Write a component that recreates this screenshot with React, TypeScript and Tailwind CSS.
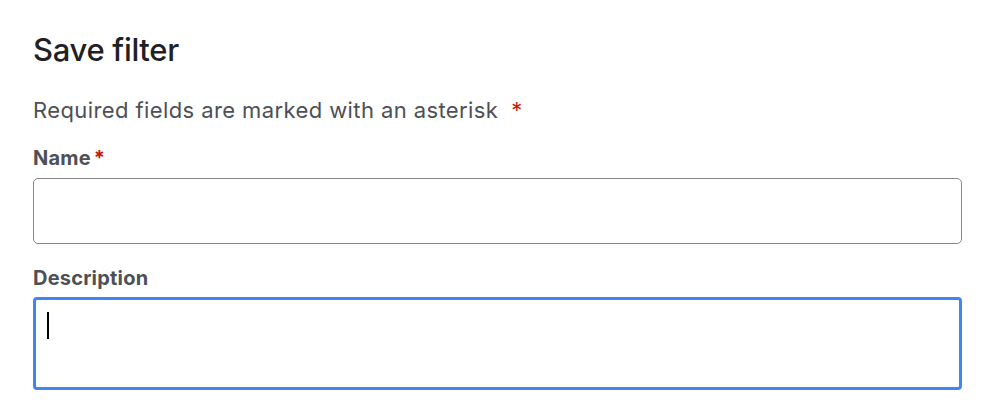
import React from "react";

export default function App() {
  return (
    <div className="w-[998px] h-[408px] bg-white overflow-hidden" style={{ fontFamily: 'Inter, "Liberation Sans", sans-serif' }}>
      <div className="pl-[33px] pr-[36px] pt-[30px]">
        <h1 className="text-[31px] leading-[40px] font-medium text-[#1f2125] tracking-[-0.3px]">Save filter</h1>
        <p className="mt-[26px] text-[22px] leading-[28px] text-[#4d5056] tracking-[0.4px]">
          Required fields are marked with an asterisk<span className="ml-[13px] text-[#c9190b]">*</span>
        </p>
        <label className="mt-[22px] block text-[20px] leading-[24px] font-bold text-[#4d5056] tracking-[0.2px]">
          Name<span className="ml-[3px] text-[#c9190b]">*</span>
        </label>
        <div className="mt-[8px] h-[66px] w-[929px] rounded-[5px] border-[1.5px] border-[#85888d] bg-white" />
        <label className="mt-[22px] block text-[20px] leading-[24px] font-bold text-[#4d5056] tracking-[0.2px]">Description</label>
        <div className="mt-[7px] h-[93px] w-[929px] rounded-[4px] border-[3px] border-[#3f86f3] bg-white relative">
          <div className="absolute left-[11px] top-[12px] h-[27px] w-[2px] bg-black" />
        </div>
      </div>
    </div>
  );
}
